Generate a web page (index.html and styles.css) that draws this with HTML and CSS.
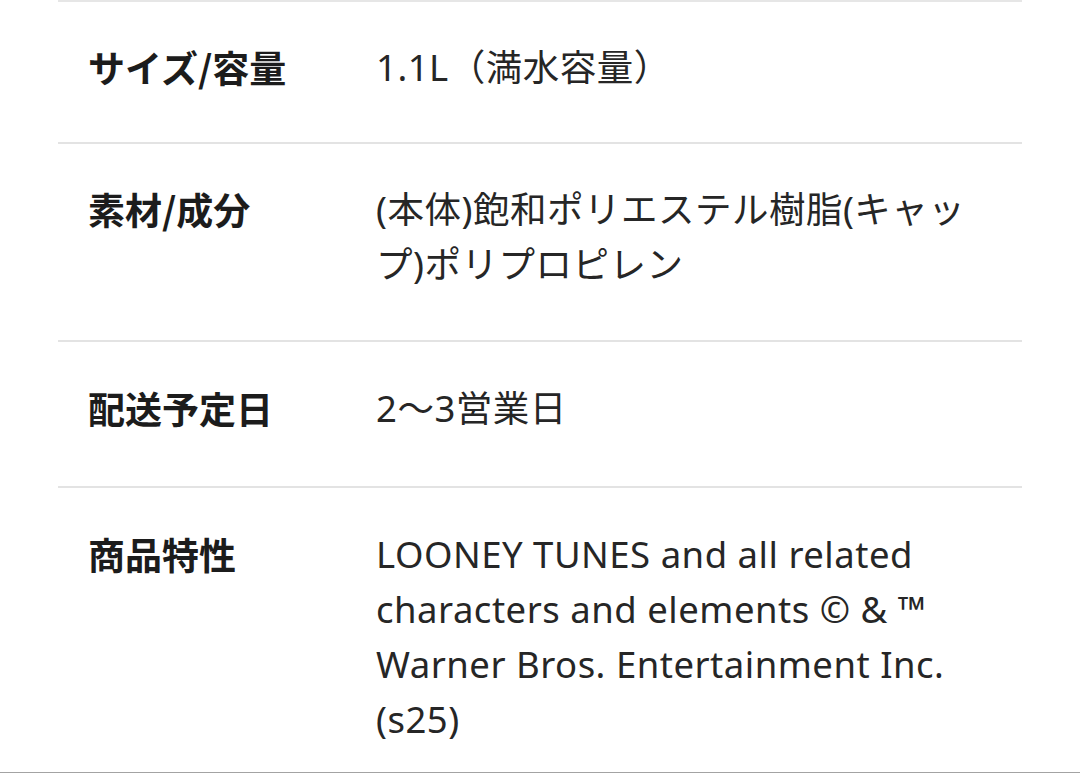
FILE: index.html
```html
<!DOCTYPE html>
<html lang="ja">
<head>
<meta charset="utf-8">
<link rel="stylesheet" href="styles.css">
</head>
<body>
<div class="spec">
  <div class="row">
    <div class="label">サイズ/容量</div>
    <div class="value">1.1L（満水容量）</div>
  </div>
  <div class="row row-material">
    <div class="label">素材/成分</div>
    <div class="value">(本体)飽和ポリエステル樹脂(キャップ)ポリプロピレン</div>
  </div>
  <div class="row row-delivery">
    <div class="label">配送予定日</div>
    <div class="value">2～3営業日</div>
  </div>
  <div class="row last">
    <div class="label">商品特性</div>
    <div class="value">LOONEY TUNES and all related characters and elements © &amp; ™ Warner Bros. Entertainment Inc. (s25)</div>
  </div>
</div>
<div class="bottom-rule"></div>
</body>
</html>
```
FILE: styles.css
```css
html, body {
  margin: 0;
  padding: 0;
  background: #ffffff;
}
body {
  width: 1080px;
  height: 773px;
  overflow: hidden;
  font-family: "Noto Sans", "Noto Sans CJK JP", sans-serif;
  color: #222222;
}
.spec {
  margin: 0 58px;
  border-top: 2px solid #e6e6e6;
}
.row {
  display: grid;
  grid-template-columns: 288px 1fr;
  padding: 38px 30px 47px 30px;
  border-bottom: 2px solid #e3e3e3;
  font-size: 36.5px;
  line-height: 55px;
}
.row-material {
  padding-bottom: 48px;
}
.row-delivery {
  padding-top: 39px;
  padding-bottom: 50px;
}
.row.last {
  border-bottom: none;
  padding-top: 39px;
  padding-bottom: 25px;
}
.label {
  font-family: "Noto Sans CJK JP", sans-serif;
  font-weight: 700;
  font-size: 37px;
  color: #1c1c1c;
}
.value {
  color: #262626;
  letter-spacing: 0.5px;
}
.bottom-rule {
  height: 2px;
  background: #a3a3a3;
}
```
